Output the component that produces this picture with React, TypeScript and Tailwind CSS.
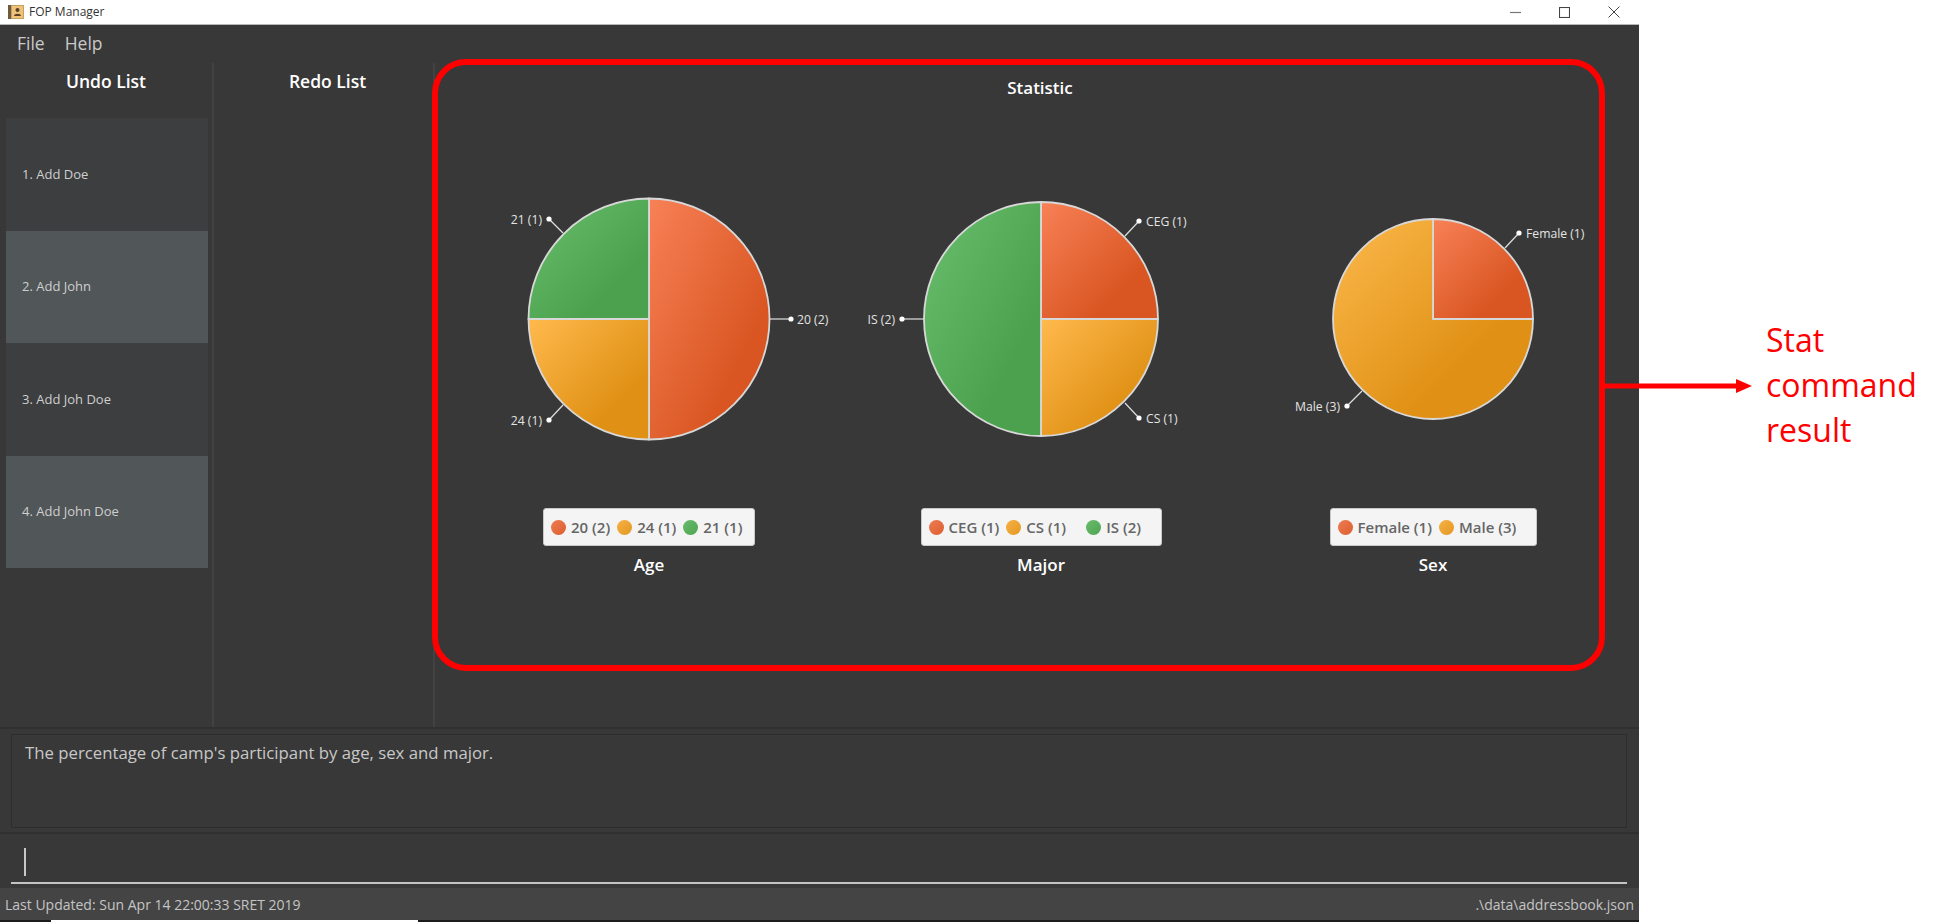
const font = { fontFamily: '"Open Sans", "Noto Sans", sans-serif' };

const undoItems = ["1. Add Doe", "2. Add John", "3. Add Joh Doe", "4. Add John Doe"];

type Slice = { d: string; fill: string };
type Callout = { line: [number, number, number, number]; text: string; anchor: "start" | "end"; tx: number };
type Legend = { label: string; color: string; gap?: string };

const r1 = 120.5;
const r2 = 117;
const r3 = 100;

const charts: {
  title: string;
  slices: Slice[];
  callouts: Callout[];
  legend: Legend[];
  legendClass: string;
}[] = [
  {
    title: "Age",
    slices: [
      { d: `M196 160 V${160 - r1} A${r1} ${r1} 0 0 1 196 ${160 + r1} Z`, fill: "url(#orange)" },
      { d: `M196 160 V${160 + r1} A${r1} ${r1} 0 0 1 ${196 - r1} 160 Z`, fill: "url(#yellow)" },
      { d: `M196 160 H${196 - r1} A${r1} ${r1} 0 0 1 196 ${160 - r1} Z`, fill: "url(#green)" },
    ],
    callouts: [
      { line: [316, 160, 338, 160], text: "20 (2)", anchor: "start", tx: 344 },
      { line: [110, 74, 96, 60], text: "21 (1)", anchor: "end", tx: 89 },
      { line: [110, 246, 96, 261], text: "24 (1)", anchor: "end", tx: 89 },
    ],
    legend: [
      { label: "20 (2)", color: "bg-gradient-to-br from-[#ee7a50] to-[#dc5f30]" },
      { label: "24 (1)", color: "bg-gradient-to-br from-[#f6b044] to-[#e3981f]" },
      { label: "21 (1)", color: "bg-gradient-to-br from-[#68bb6c] to-[#4ea552]" },
    ],
    legendClass: "w-[212px]",
  },
  {
    title: "Major",
    slices: [
      { d: `M196 160 V${160 - r2} A${r2} ${r2} 0 0 1 ${196 + r2} 160 Z`, fill: "url(#orange)" },
      { d: `M196 160 H${196 + r2} A${r2} ${r2} 0 0 1 196 ${160 + r2} Z`, fill: "url(#yellow)" },
      { d: `M196 160 V${160 + r2} A${r2} ${r2} 0 0 1 196 ${160 - r2} Z`, fill: "url(#green)" },
    ],
    callouts: [
      { line: [280, 77, 294, 62], text: "CEG (1)", anchor: "start", tx: 301 },
      { line: [280, 244, 294, 259], text: "CS (1)", anchor: "start", tx: 301 },
      { line: [79, 160, 57, 160], text: "IS (2)", anchor: "end", tx: 50 },
    ],
    legend: [
      { label: "CEG (1)", color: "bg-gradient-to-br from-[#ee7a50] to-[#dc5f30]" },
      { label: "CS (1)", color: "bg-gradient-to-br from-[#f6b044] to-[#e3981f]", gap: "w-[80px]" },
      { label: "IS (2)", color: "bg-gradient-to-br from-[#68bb6c] to-[#4ea552]" },
    ],
    legendClass: "w-[241px]",
  },
  {
    title: "Sex",
    slices: [
      { d: `M196 160 V${160 - r3} A${r3} ${r3} 0 0 1 ${196 + r3} 160 Z`, fill: "url(#orange)" },
      { d: `M196 160 H${196 + r3} A${r3} ${r3} 0 1 1 196 ${160 - r3} Z`, fill: "url(#yellowWide)" },
    ],
    callouts: [
      { line: [268, 89, 282, 74], text: "Female (1)", anchor: "start", tx: 289 },
      { line: [125, 232, 110, 247], text: "Male (3)", anchor: "end", tx: 103 },
    ],
    legend: [
      { label: "Female (1)", color: "bg-gradient-to-br from-[#ee7a50] to-[#dc5f30]" },
      { label: "Male (3)", color: "bg-gradient-to-br from-[#f6b044] to-[#e3981f]" },
    ],
    legendClass: "w-[207px]",
  },
];

function Gradients() {
  return (
    <svg width="0" height="0" className="absolute">
      <defs>
        <linearGradient id="orange" x1="0" y1="0" x2="1" y2="1">
          <stop offset="0" stopColor="#f88157" />
          <stop offset="0.72" stopColor="#d95622" />
        </linearGradient>
        <linearGradient id="yellow" x1="0" y1="0" x2="1" y2="1">
          <stop offset="0" stopColor="#ffb94d" />
          <stop offset="0.72" stopColor="#e09115" />
        </linearGradient>
        <linearGradient id="yellowWide" x1="0" y1="0" x2="1" y2="1">
          <stop offset="0.1" stopColor="#f8b344" />
          <stop offset="0.68" stopColor="#e09115" />
        </linearGradient>
        <linearGradient id="green" x1="0" y1="0" x2="1" y2="1">
          <stop offset="0" stopColor="#6abf6e" />
          <stop offset="0.72" stopColor="#4ca14e" />
        </linearGradient>
      </defs>
    </svg>
  );
}

function PieChart({ chart }: { chart: (typeof charts)[number] }) {
  return (
    <div className="flex w-[392px] flex-col items-center">
      <svg width="392" height="320" viewBox="0 0 392 320" className="block">
        {chart.slices.map((s) => (
          <path key={s.d} d={s.d} fill={s.fill} stroke="#d8d8d8" strokeWidth="1.8" strokeLinejoin="round" />
        ))}
        {chart.callouts.map((c) => (
          <g key={c.text}>
            <line x1={c.line[0]} y1={c.line[1]} x2={c.line[2]} y2={c.line[3]} stroke="#e0e0e0" strokeWidth="1.2" />
            <circle cx={c.line[2]} cy={c.line[3]} r="2.6" fill="#ffffff" />
            <text x={c.tx} y={c.line[3] + 4.5} textAnchor={c.anchor} fontSize="12.2" fill="#e4e4e4">
              {c.text}
            </text>
          </g>
        ))}
      </svg>
      <div
        className={`mt-[29px] flex h-[38px] items-center rounded-[3px] border border-[#c8c8c8] bg-[#f4f4f4] pl-[7px] ${chart.legendClass}`}
      >
        {chart.legend.map((l) => (
          <div key={l.label} className={`flex items-center ${l.gap ?? ""}`}>
            <span className={`h-[15px] w-[15px] rounded-full ${l.color}`} />
            <span className="ml-[5px] mr-[7px] text-[15px] font-semibold text-[#666666]">{l.label}</span>
          </div>
        ))}
      </div>
      <div className="mt-[7px] text-[17px] leading-[24px] font-semibold text-white">{chart.title}</div>
    </div>
  );
}

export default function App() {
  return (
    <div className="relative h-[922px] w-[1958px] overflow-hidden bg-white" style={font}>
      <Gradients />
      <div className="flex h-full w-[1639px] flex-col bg-[#383838]">
        {/* Title bar */}
        <div className="flex h-[25px] shrink-0 items-center border-b border-[#b8b8b8] bg-white pl-[8px] pr-[19px]">
          <svg width="16" height="14" viewBox="0 0 16 14">
            <rect x="0" y="0" width="16" height="14" fill="#c99f5c" />
            <rect x="0" y="0" width="3" height="14" fill="#6e5a3c" />
            <rect x="4" y="1" width="11" height="12" fill="#eec27a" />
            <circle cx="9.5" cy="5" r="2" fill="#5a4020" />
            <path d="M6 11 C6 8 13 8 13 11 Z" fill="#5a4020" />
          </svg>
          <span className="ml-[5px] text-[12px] text-[#333333]">FOP Manager</span>
          <div className="ml-auto flex items-center gap-[38px]">
            <svg width="11" height="11" viewBox="0 0 11 11">
              <path d="M0 5.5 H11" stroke="#777777" strokeWidth="1.2" />
            </svg>
            <svg width="11" height="11" viewBox="0 0 11 11">
              <rect x="0.5" y="0.5" width="10" height="10" fill="none" stroke="#444444" strokeWidth="1.1" />
            </svg>
            <svg width="12" height="12" viewBox="0 0 12 12">
              <path d="M0.5 0.5 L11.5 11.5 M11.5 0.5 L0.5 11.5" stroke="#444444" strokeWidth="1" />
            </svg>
          </div>
        </div>

        {/* Menu */}
        <div className="flex h-[38px] shrink-0 items-center gap-[20px] pb-[2px] pl-[17px] text-[17.5px] text-[#c9c9c9]">
          <span>File</span>
          <span>Help</span>
        </div>

        {/* Main */}
        <div className="flex h-[664px] shrink-0">
          <div className="w-[214px] shrink-0 border-r-2 border-[#424242]">
            <div className="flex h-[55px] items-center justify-center pb-[18px] text-[17.5px] font-semibold text-white">
              Undo List
            </div>
            <div className="pl-[6px] pr-[4px]">
              {undoItems.map((item, i) => (
                <div
                  key={item}
                  className={`flex h-[112.5px] items-center pl-[16px] text-[13px] text-[#cfcfcf] ${
                    i % 2 === 0 ? "bg-[#3c3e3f]" : "bg-[#515658]"
                  }`}
                >
                  {item}
                </div>
              ))}
            </div>
          </div>
          <div className="w-[221px] shrink-0 border-r-2 border-[#424242]">
            <div className="flex h-[55px] items-center justify-center pb-[18px] pl-[8px] text-[17.5px] font-semibold text-white">
              Redo List
            </div>
          </div>
          <div className="flex-1">
            <div className="flex h-[50px] items-center justify-center pl-[6px] text-[17px] font-semibold text-white">
              Statistic
            </div>
            <div className="mt-[46px] flex pl-[18px]">
              {charts.map((c) => (
                <PieChart key={c.title} chart={c} />
              ))}
            </div>
          </div>
        </div>

        {/* Result box */}
        <div className="h-[107px] shrink-0 border-y-2 border-[#303030] pl-[11px] pr-[12px] py-[5px]">
          <div className="h-[94px] border border-[#2d2d2d] px-[13px] pt-[5px] text-[16.75px] text-[#c8c8c8]">
            The percentage of camp&apos;s participant by age, sex and major.
          </div>
        </div>

        {/* Command box */}
        <div className="flex h-[54px] shrink-0 flex-col pl-[11px] pr-[12px] pt-[14px]">
          <div className="ml-[13px] h-[28px] w-[2px] bg-[#c8c8c8]" />
          <div className="mt-[6px] h-[2px] w-full bg-[#c4c4c4]" />
        </div>

        {/* Status bar */}
        <div className="flex h-[32px] shrink-0 items-center justify-between bg-[#444444] px-[5px] text-[14px] text-[#c4c4c4]">
          <span>Last Updated: Sun Apr 14 22:00:33 SRET 2019</span>
          <span>.\data\addressbook.json</span>
        </div>
        <div className="relative h-[2px] shrink-0 bg-[#1c1c1c]">
          <div className="absolute left-[51px] top-0 h-[2px] w-[367px] bg-white" />
        </div>
      </div>

      {/* Annotation */}
      <div className="absolute left-[432px] top-[59px] h-[612px] w-[1173px] rounded-[34px] border-[6px] border-[#ff0000]" />
      <svg className="absolute left-[1605px] top-[376px]" width="148" height="20" viewBox="0 0 148 20">
        <path d="M0 10 H132" stroke="#ff0000" strokeWidth="5" />
        <path d="M131 3 L147 10 L131 17 Z" fill="#ff0000" />
      </svg>
      <div className="absolute left-[1766px] top-[317px] text-[32px] leading-[45px] text-[#ff0000]">
        Stat
        <br />
        command
        <br />
        result
      </div>
    </div>
  );
}
